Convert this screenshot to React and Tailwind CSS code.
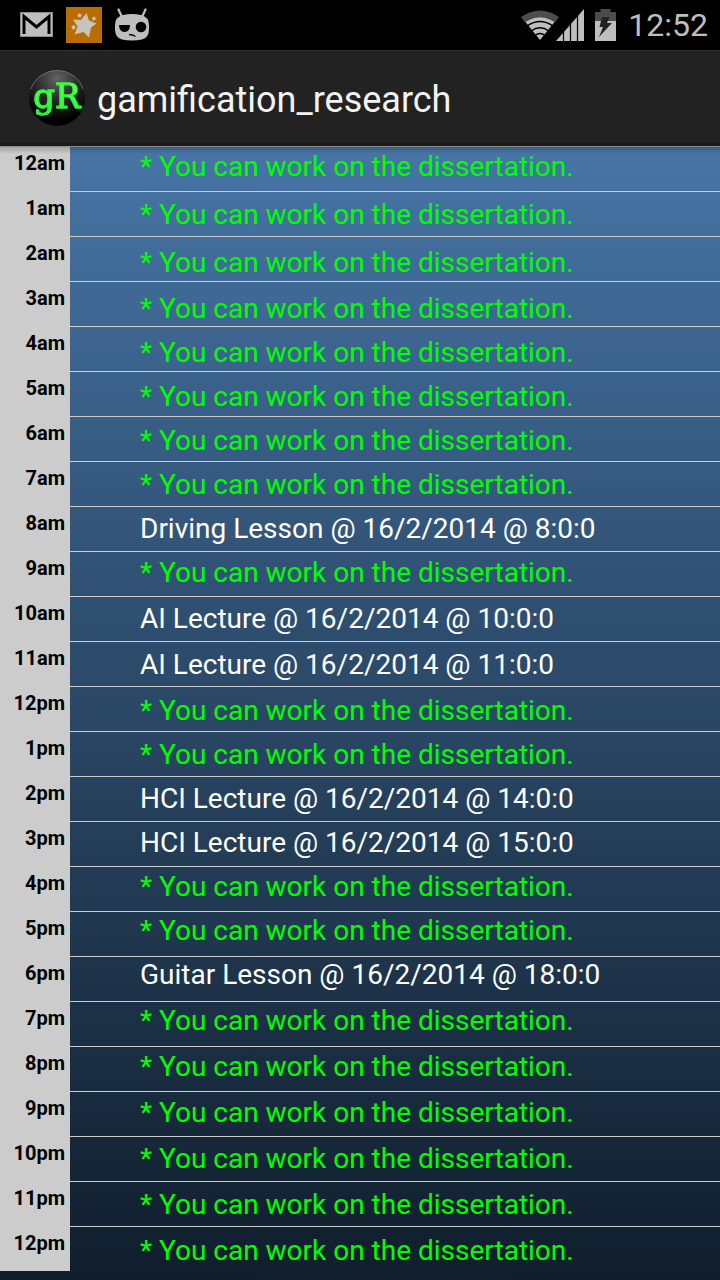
import React from "react";

const WORK = "* You can work on the dissertation.";

const hours = [
  "12am", "1am", "2am", "3am", "4am", "5am", "6am", "7am", "8am", "9am",
  "10am", "11am", "12pm", "1pm", "2pm", "3pm", "4pm", "5pm", "6pm", "7pm",
  "8pm", "9pm", "10pm", "11pm", "12pm",
];

const SHORT = "h-11";
const MEDIUM = "h-[46px]";
const TALL = "h-12";

const events = [
  { size: TALL },
  { size: TALL },
  { size: MEDIUM },
  { size: SHORT },
  { size: SHORT },
  { size: SHORT },
  { size: SHORT },
  { size: SHORT },
  { size: SHORT, title: "Driving Lesson @ 16/2/2014 @ 8:0:0" },
  { size: MEDIUM },
  { size: MEDIUM, title: "AI Lecture @ 16/2/2014 @ 10:0:0" },
  { size: MEDIUM, title: "AI Lecture @ 16/2/2014 @ 11:0:0" },
  { size: SHORT },
  { size: SHORT },
  { size: SHORT, title: "HCI Lecture @ 16/2/2014 @ 14:0:0" },
  { size: SHORT, title: "HCI Lecture @ 16/2/2014 @ 15:0:0" },
  { size: SHORT },
  { size: SHORT },
  { size: MEDIUM, title: "Guitar Lesson @ 16/2/2014 @ 18:0:0" },
  { size: MEDIUM },
  { size: MEDIUM },
  { size: MEDIUM },
  { size: MEDIUM },
  { size: MEDIUM },
  { size: SHORT },
];

function MailIcon() {
  return (
    <svg width="34" height="26" viewBox="0 0 34 26" aria-hidden="true">
      <rect x="0.500" y="0.500" width="32" height="24" fill="#bebebe" stroke="#8c8c8c" strokeWidth="1" />
      <path d="M4 22V4.500L16.500 15L29 4.500V22" fill="none" stroke="#000" strokeWidth="3" strokeLinejoin="miter" />
    </svg>
  );
}

function StarsIcon() {
  return (
    <svg width="36" height="36" viewBox="0 0 36 36" aria-hidden="true">
      <rect width="36" height="36" fill="#b96c00" />
      <path
        d="M20.500 6L23 13.500L30.500 16.500L25 20.500L23 30.500L17.500 25L8.500 27.500L11.500 19.500L7 12.500L15 13Z"
        fill="#c8c3bb"
      />
      <path
        d="M13.500 6L14.600 7.300L16 7.700L15 9L15 10.500L13.500 10L12 10.500L12 9L11 7.800L12.700 7.300Z"
        fill="#c8c3bb"
      />
      <path
        d="M28 9L29 10.500L30.500 11L29.300 12L29.300 13.500L28 13L26.500 13.500L26.500 12L25.500 11L27.200 10.500Z"
        fill="#c8c3bb"
      />
      <path
        d="M7.500 17.500L8.500 19L10 19.500L9 20.700L9 22.500L7.500 22L6 22.500L6 20.700L5 19.500L6.700 19Z"
        fill="#c8c3bb"
      />
    </svg>
  );
}

function RobotIcon() {
  return (
    <svg width="36" height="34" viewBox="0 0 36 34" aria-hidden="true">
      <path d="M4.500 1.500L7.500 8M31.500 1.500L28.500 8" stroke="#bebebe" strokeWidth="2.200" strokeLinecap="round" />
      <path
        d="M9 7Q18 5 27 7Q35 9 35 17V21Q35 30 28 31.500Q18 33.500 8 31.500Q1 30 1 21V17Q1 9 9 7Z"
        fill="#bebebe"
      />
      <path d="M5 17H16Q16 24 10.500 24Q5 23.500 5 17Z" fill="#000" />
      <circle cx="27" cy="19" r="5.300" fill="#000" />
      <path d="M15 26.500L18.500 27L21.500 28.500" fill="none" stroke="#000" strokeWidth="1.300" />
    </svg>
  );
}

function WifiIcon() {
  return (
    <svg width="38" height="30" viewBox="0 0 38 30" aria-hidden="true">
      <path d="M0 7Q19 -6 38 7L34 12.500Q19 2 4 12.500Z" fill="#4c4c4c" />
      <path d="M4.500 12Q19 2.500 33.500 12L19 30Z" fill="#bebebe" />
      <path
        d="M6 16Q19 7 32 16M10 21Q19 14.500 28 21M14 25.500Q19 21.500 24 25.500"
        fill="none"
        stroke="#000"
        strokeWidth="1.300"
      />
    </svg>
  );
}

function SignalIcon() {
  return (
    <svg width="28" height="32" viewBox="0 0 28 32" aria-hidden="true">
      <path d="M28 0V32H0Z" fill="#bebebe" />
      <path d="M7.500 0V32M14.500 0V32M21.500 0V32" stroke="#000" strokeWidth="1.200" />
    </svg>
  );
}

function BatteryIcon() {
  return (
    <svg width="21" height="32" viewBox="0 0 21 32" aria-hidden="true">
      <path d="M5.500 0H15.500V3H21V12H0V3H5.500Z" fill="#4c4c4c" />
      <rect y="12" width="21" height="20" fill="#bebebe" />
      <path d="M7 8H14.500L12 14H17L4 28L8 18H4.500Z" fill="#222" />
    </svg>
  );
}

function AppLogo() {
  return (
    <span className="relative flex size-[58px] shrink-0 items-center justify-center">
      <svg className="absolute inset-0" width="58" height="58" viewBox="0 0 58 58" aria-hidden="true">
        <defs>
          <radialGradient id="ball" cx="0.5" cy="0.15" r="0.75">
            <stop offset="0" stopColor="#646464" />
            <stop offset="0.55" stopColor="#262626" />
            <stop offset="1" stopColor="#000" />
          </radialGradient>
        </defs>
        <circle cx="29" cy="29" r="28" fill="url(#ball)" />
        <path d="M3 20A27.500 27.500 0 0 1 55 20" fill="none" stroke="#777" strokeWidth="0.800" />
      </svg>
      <span className="relative bg-linear-to-b from-[#6cff6c] to-[#00f810] bg-clip-text pb-1 font-['DejaVu_Serif',serif] text-[34px] leading-10 text-transparent [-webkit-text-stroke:1px_#22fa2a]">
        gR
      </span>
    </span>
  );
}

export default function App() {
  return (
    <div className="flex min-h-screen flex-col bg-black font-['Roboto',sans-serif]">
      <div className="flex h-[50px] items-center justify-between pr-3 pl-5">
        <div className="flex items-center gap-3">
          <MailIcon />
          <StarsIcon />
          <RobotIcon />
        </div>
        <div className="flex items-center">
          <span className="-mr-[3px]">
            <WifiIcon />
          </span>
          <SignalIcon />
          <span className="ml-[11px]">
            <BatteryIcon />
          </span>
          <time className="ml-3 text-[32px] leading-10 text-[#bebebe]">12:52</time>
        </div>
      </div>

      <header className="flex h-24 items-center gap-[11px] border-t border-b-3 border-t-[#303030] border-b-[#1b1b1b] bg-[#222] pt-[2px] pl-7">
        <AppLogo />
        <h1 className="pt-1 text-4xl leading-12 text-[#f3f3f3]">gamification_research</h1>
      </header>

      <main className="relative grid flex-1 content-start bg-linear-to-b from-[#4775a6] to-[#101e2c]">
        <ol className="col-start-1 row-start-1">
          {hours.map((hour, i) => (
            <li key={i} className="flex h-[45px]">
              <span className="w-[70px] bg-[#ccc] pt-[5px] pr-[5px] text-right text-xl leading-6 font-bold text-black">
                {hour}
              </span>
              <span className="flex-1 border-t border-[#ccc]" />
            </li>
          ))}
        </ol>
        <ul className="col-start-1 row-start-1 pt-[5px] pl-[140px] text-[28px] leading-8">
          {events.map(({ size, title }, i) => (
            <li key={i} className={`${size} whitespace-nowrap ${title ? "text-white" : "text-[#00ff00]"}`}>
              {title || WORK}
            </li>
          ))}
        </ul>
        <div className="pointer-events-none absolute inset-x-0 top-0 h-2 border-t border-[#8c8c8c] bg-linear-to-b from-black/20 to-transparent" />
      </main>
    </div>
  );
}
